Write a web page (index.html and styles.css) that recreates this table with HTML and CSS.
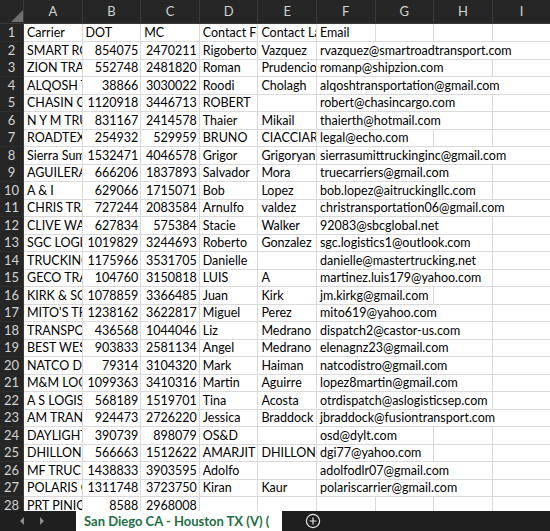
FILE: index.html
```html
<!DOCTYPE html>
<html>
<head>
<meta charset="utf-8">
<link rel="stylesheet" href="styles.css">
</head>
<body>
<div class="sheet">
  <div class="hdr">
    <div class="corner"><svg width="24" height="24" viewBox="0 0 24 24"><polygon points="23,10 23,22 11,22" fill="#6f6f6f"/></svg></div>
    <div class="col">A</div><div class="col">B</div><div class="col">C</div><div class="col">D</div><div class="col">E</div><div class="col">F</div><div class="col">G</div><div class="col">H</div><div class="col">I</div>
  </div>
  <div class="row"><div class="rh">1</div><div class="c">Carrier</div><div class="c">DOT</div><div class="c">MC</div><div class="c">Contact First</div><div class="c">Contact Last</div><div class="c">Email</div><div class="c"></div><div class="c"></div><div class="c"></div></div>
  <div class="row"><div class="rh">2</div><div class="c">SMART ROAD</div><div class="c n">854075</div><div class="c n">2470211</div><div class="c">Rigoberto</div><div class="c">Vazquez</div><div class="c s4">rvazquez@smartroadtransport.com</div></div>
  <div class="row"><div class="rh">3</div><div class="c">ZION TRANSPORT</div><div class="c n">552748</div><div class="c n">2481820</div><div class="c">Roman</div><div class="c">Prudencio</div><div class="c s3">romanp@shipzion.com</div><div class="c"></div></div>
  <div class="row"><div class="rh">4</div><div class="c">ALQOSH TRANSPORTATION</div><div class="c n">38866</div><div class="c n">3030022</div><div class="c">Roodi</div><div class="c">Cholagh</div><div class="c s4">alqoshtransportation@gmail.com</div></div>
  <div class="row"><div class="rh">5</div><div class="c">CHASIN CARGO</div><div class="c n">1120918</div><div class="c n">3446713</div><div class="c">ROBERT</div><div class="c"></div><div class="c s3">robert@chasincargo.com</div><div class="c"></div></div>
  <div class="row"><div class="rh">6</div><div class="c">N Y M TRUCKING</div><div class="c n">831167</div><div class="c n">2414578</div><div class="c">Thaier</div><div class="c">Mikail</div><div class="c s3">thaierth@hotmail.com</div><div class="c"></div></div>
  <div class="row"><div class="rh">7</div><div class="c">ROADTEX TRANSPORTATION</div><div class="c n">254932</div><div class="c n">529959</div><div class="c">BRUNO</div><div class="c">CIACCIARELLI</div><div class="c s2">legal@echo.com</div><div class="c"></div><div class="c"></div></div>
  <div class="row"><div class="rh">8</div><div class="c">Sierra Summit</div><div class="c n">1532471</div><div class="c n">4046578</div><div class="c">Grigor</div><div class="c">Grigoryan</div><div class="c s4">sierrasumittruckinginc@gmail.com</div></div>
  <div class="row"><div class="rh">9</div><div class="c">AGUILERA TRUCKING</div><div class="c n">666206</div><div class="c n">1837893</div><div class="c">Salvador</div><div class="c">Mora</div><div class="c s3">truecarriers@gmail.com</div><div class="c"></div></div>
  <div class="row"><div class="rh">10</div><div class="c">A &amp; I</div><div class="c n">629066</div><div class="c n">1715071</div><div class="c">Bob</div><div class="c">Lopez</div><div class="c s3">bob.lopez@aitruckingllc.com</div><div class="c"></div></div>
  <div class="row"><div class="rh">11</div><div class="c">CHRIS TRANSPORTATION</div><div class="c n">727244</div><div class="c n">2083584</div><div class="c">Arnulfo</div><div class="c">valdez</div><div class="c s4">christransportation06@gmail.com</div></div>
  <div class="row"><div class="rh">12</div><div class="c">CLIVE WALKER</div><div class="c n">627834</div><div class="c n">575384</div><div class="c">Stacie</div><div class="c">Walker</div><div class="c s3">92083@sbcglobal.net</div><div class="c"></div></div>
  <div class="row"><div class="rh">13</div><div class="c">SGC LOGISTICS</div><div class="c n">1019829</div><div class="c n">3244693</div><div class="c">Roberto</div><div class="c">Gonzalez</div><div class="c s3">sgc.logistics1@outlook.com</div><div class="c"></div></div>
  <div class="row"><div class="rh">14</div><div class="c">TRUCKING MASTERS</div><div class="c n">1175966</div><div class="c n">3531705</div><div class="c">Danielle</div><div class="c"></div><div class="c s3">danielle@mastertrucking.net</div><div class="c"></div></div>
  <div class="row"><div class="rh">15</div><div class="c">GECO TRANSPORT</div><div class="c n">104760</div><div class="c n">3150818</div><div class="c">LUIS</div><div class="c">A</div><div class="c s3">martinez.luis179@yahoo.com</div><div class="c"></div></div>
  <div class="row"><div class="rh">16</div><div class="c">KIRK &amp; SONS</div><div class="c n">1078859</div><div class="c n">3366485</div><div class="c">Juan</div><div class="c">Kirk</div><div class="c s2">jm.kirkg@gmail.com</div><div class="c"></div><div class="c"></div></div>
  <div class="row"><div class="rh">17</div><div class="c">MITO'S TRUCKING</div><div class="c n">1238162</div><div class="c n">3622817</div><div class="c">Miguel</div><div class="c">Perez</div><div class="c s3">mito619@yahoo.com</div><div class="c"></div></div>
  <div class="row"><div class="rh">18</div><div class="c">TRANSPORTES CASTOR</div><div class="c n">436568</div><div class="c n">1044046</div><div class="c">Liz</div><div class="c">Medrano</div><div class="c s3">dispatch2@castor-us.com</div><div class="c"></div></div>
  <div class="row"><div class="rh">19</div><div class="c">BEST WESTERN</div><div class="c n">903833</div><div class="c n">2581134</div><div class="c">Angel</div><div class="c">Medrano</div><div class="c s3">elenagnz23@gmail.com</div><div class="c"></div></div>
  <div class="row"><div class="rh">20</div><div class="c">NATCO DISTRO</div><div class="c n">79314</div><div class="c n">3104320</div><div class="c">Mark</div><div class="c">Haiman</div><div class="c s3">natcodistro@gmail.com</div><div class="c"></div></div>
  <div class="row"><div class="rh">21</div><div class="c">M&amp;M LOGISTICS</div><div class="c n">1099363</div><div class="c n">3410316</div><div class="c">Martin</div><div class="c">Aguirre</div><div class="c s3">lopez8martin@gmail.com</div><div class="c"></div></div>
  <div class="row"><div class="rh">22</div><div class="c">A S LOGISTICS</div><div class="c n">568189</div><div class="c n">1519701</div><div class="c">Tina</div><div class="c">Acosta</div><div class="c s3">otrdispatch@aslogisticsep.com</div><div class="c"></div></div>
  <div class="row"><div class="rh">23</div><div class="c">AM TRANSPORT</div><div class="c n">924473</div><div class="c n">2726220</div><div class="c">Jessica</div><div class="c">Braddock</div><div class="c s4">jbraddock@fusiontransport.com</div></div>
  <div class="row"><div class="rh">24</div><div class="c">DAYLIGHT TRANSPORT</div><div class="c n">390739</div><div class="c n">898079</div><div class="c">OS&amp;D</div><div class="c"></div><div class="c s2">osd@dylt.com</div><div class="c"></div><div class="c"></div></div>
  <div class="row"><div class="rh">25</div><div class="c">DHILLON GROUP</div><div class="c n">566663</div><div class="c n">1512622</div><div class="c">AMARJIT</div><div class="c">DHILLON</div><div class="c s2">dgi77@yahoo.com</div><div class="c"></div><div class="c"></div></div>
  <div class="row"><div class="rh">26</div><div class="c">MF TRUCKING</div><div class="c n">1438833</div><div class="c n">3903595</div><div class="c">Adolfo</div><div class="c"></div><div class="c s3">adolfodlr07@gmail.com</div><div class="c"></div></div>
  <div class="row"><div class="rh">27</div><div class="c">POLARIS CARRIER</div><div class="c n">1311748</div><div class="c n">3723750</div><div class="c">Kiran</div><div class="c">Kaur</div><div class="c s3">polariscarrier@gmail.com</div><div class="c"></div></div>
  <div class="row"><div class="rh">28</div><div class="c">PRT PINION</div><div class="c n">8588</div><div class="c n">2968008</div><div class="c"></div><div class="c"></div><div class="c"></div><div class="c"></div><div class="c"></div><div class="c"></div></div>
</div>
<div class="tabbar">
  <div class="nav">
    <svg width="8" height="10" viewBox="0 0 8 10"><polygon points="6,1 6,9 2,5" fill="#8a8a8a"/></svg>
    <svg width="8" height="10" viewBox="0 0 8 10"><polygon points="2,1 2,9 6,5" fill="#8a8a8a"/></svg>
  </div>
  <div class="tab">San Diego CA - Houston TX (V) (</div>
  <div class="add"><svg width="16" height="16" viewBox="0 0 16 16"><circle cx="8" cy="8" r="6.6" fill="none" stroke="#e6e6e6" stroke-width="1.2"/><path d="M8 4.6V11.4M4.6 8H11.4" stroke="#e6e6e6" stroke-width="1.2"/></svg></div>
</div>
</body>
</html>
```

FILE: styles.css
```css
html, body {
  margin: 0;
  padding: 0;
}
body {
  width: 550px;
  height: 531px;
  overflow: hidden;
  display: flex;
  flex-direction: column;
  background: #ffffff;
  font-family: Lato, "Liberation Sans", sans-serif;
}
.sheet {
  flex: 1;
  overflow: hidden;
  min-height: 0;
}
.hdr, .row {
  display: grid;
  grid-template-columns: 24px repeat(9, 58.6px);
}
.hdr {
  height: 24px;
  background: #262626;
  box-sizing: border-box;
  border-bottom: 1px solid #3a3a3a;
}
.corner {
  height: 23px;
  overflow: hidden;
  border-right: 1px solid #3a3a3a;
}
.corner svg {
  display: block;
}
.col {
  color: #d0d0d0;
  font-size: 13px;
  line-height: 23px;
  text-align: center;
  border-right: 1px solid #3a3a3a;
}
.row {
  height: 17.5px;
}
.rh {
  background: #262626;
  color: #d4d4d4;
  font-size: 13px;
  line-height: 17px;
  text-align: center;
  box-sizing: border-box;
  border-bottom: 1px solid #2f2f2f;
  border-right: 1px solid #3a3a3a;
}
.c {
  box-sizing: border-box;
  border-right: 1px solid #dadada;
  border-bottom: 1px solid #dadada;
  padding: 0 2px 0 3px;
  white-space: nowrap;
  overflow: hidden;
  font-size: 12.5px;
  line-height: 17px;
  color: #000000;
}
.n {
  text-align: right;
}
.s2 { grid-column: span 2; }
.s3 { grid-column: span 3; }
.s4 { grid-column: span 4; }
.tabbar {
  height: 20px;
  flex: none;
  background: #1f1f1f;
  display: flex;
  align-items: stretch;
}
.nav {
  width: 76px;
  display: flex;
  align-items: center;
  gap: 12px;
  padding-left: 18px;
  box-sizing: border-box;
}
.nav svg { display: block; }
.tab {
  width: 206px;
  box-sizing: border-box;
  background: #ffffff;
  color: #1d7044;
  font-weight: bold;
  font-size: 13px;
  line-height: 20px;
  padding-left: 8px;
  white-space: nowrap;
  overflow: hidden;
}
.add {
  display: flex;
  align-items: center;
  padding-left: 23px;
}
.add svg { display: block; }
```
